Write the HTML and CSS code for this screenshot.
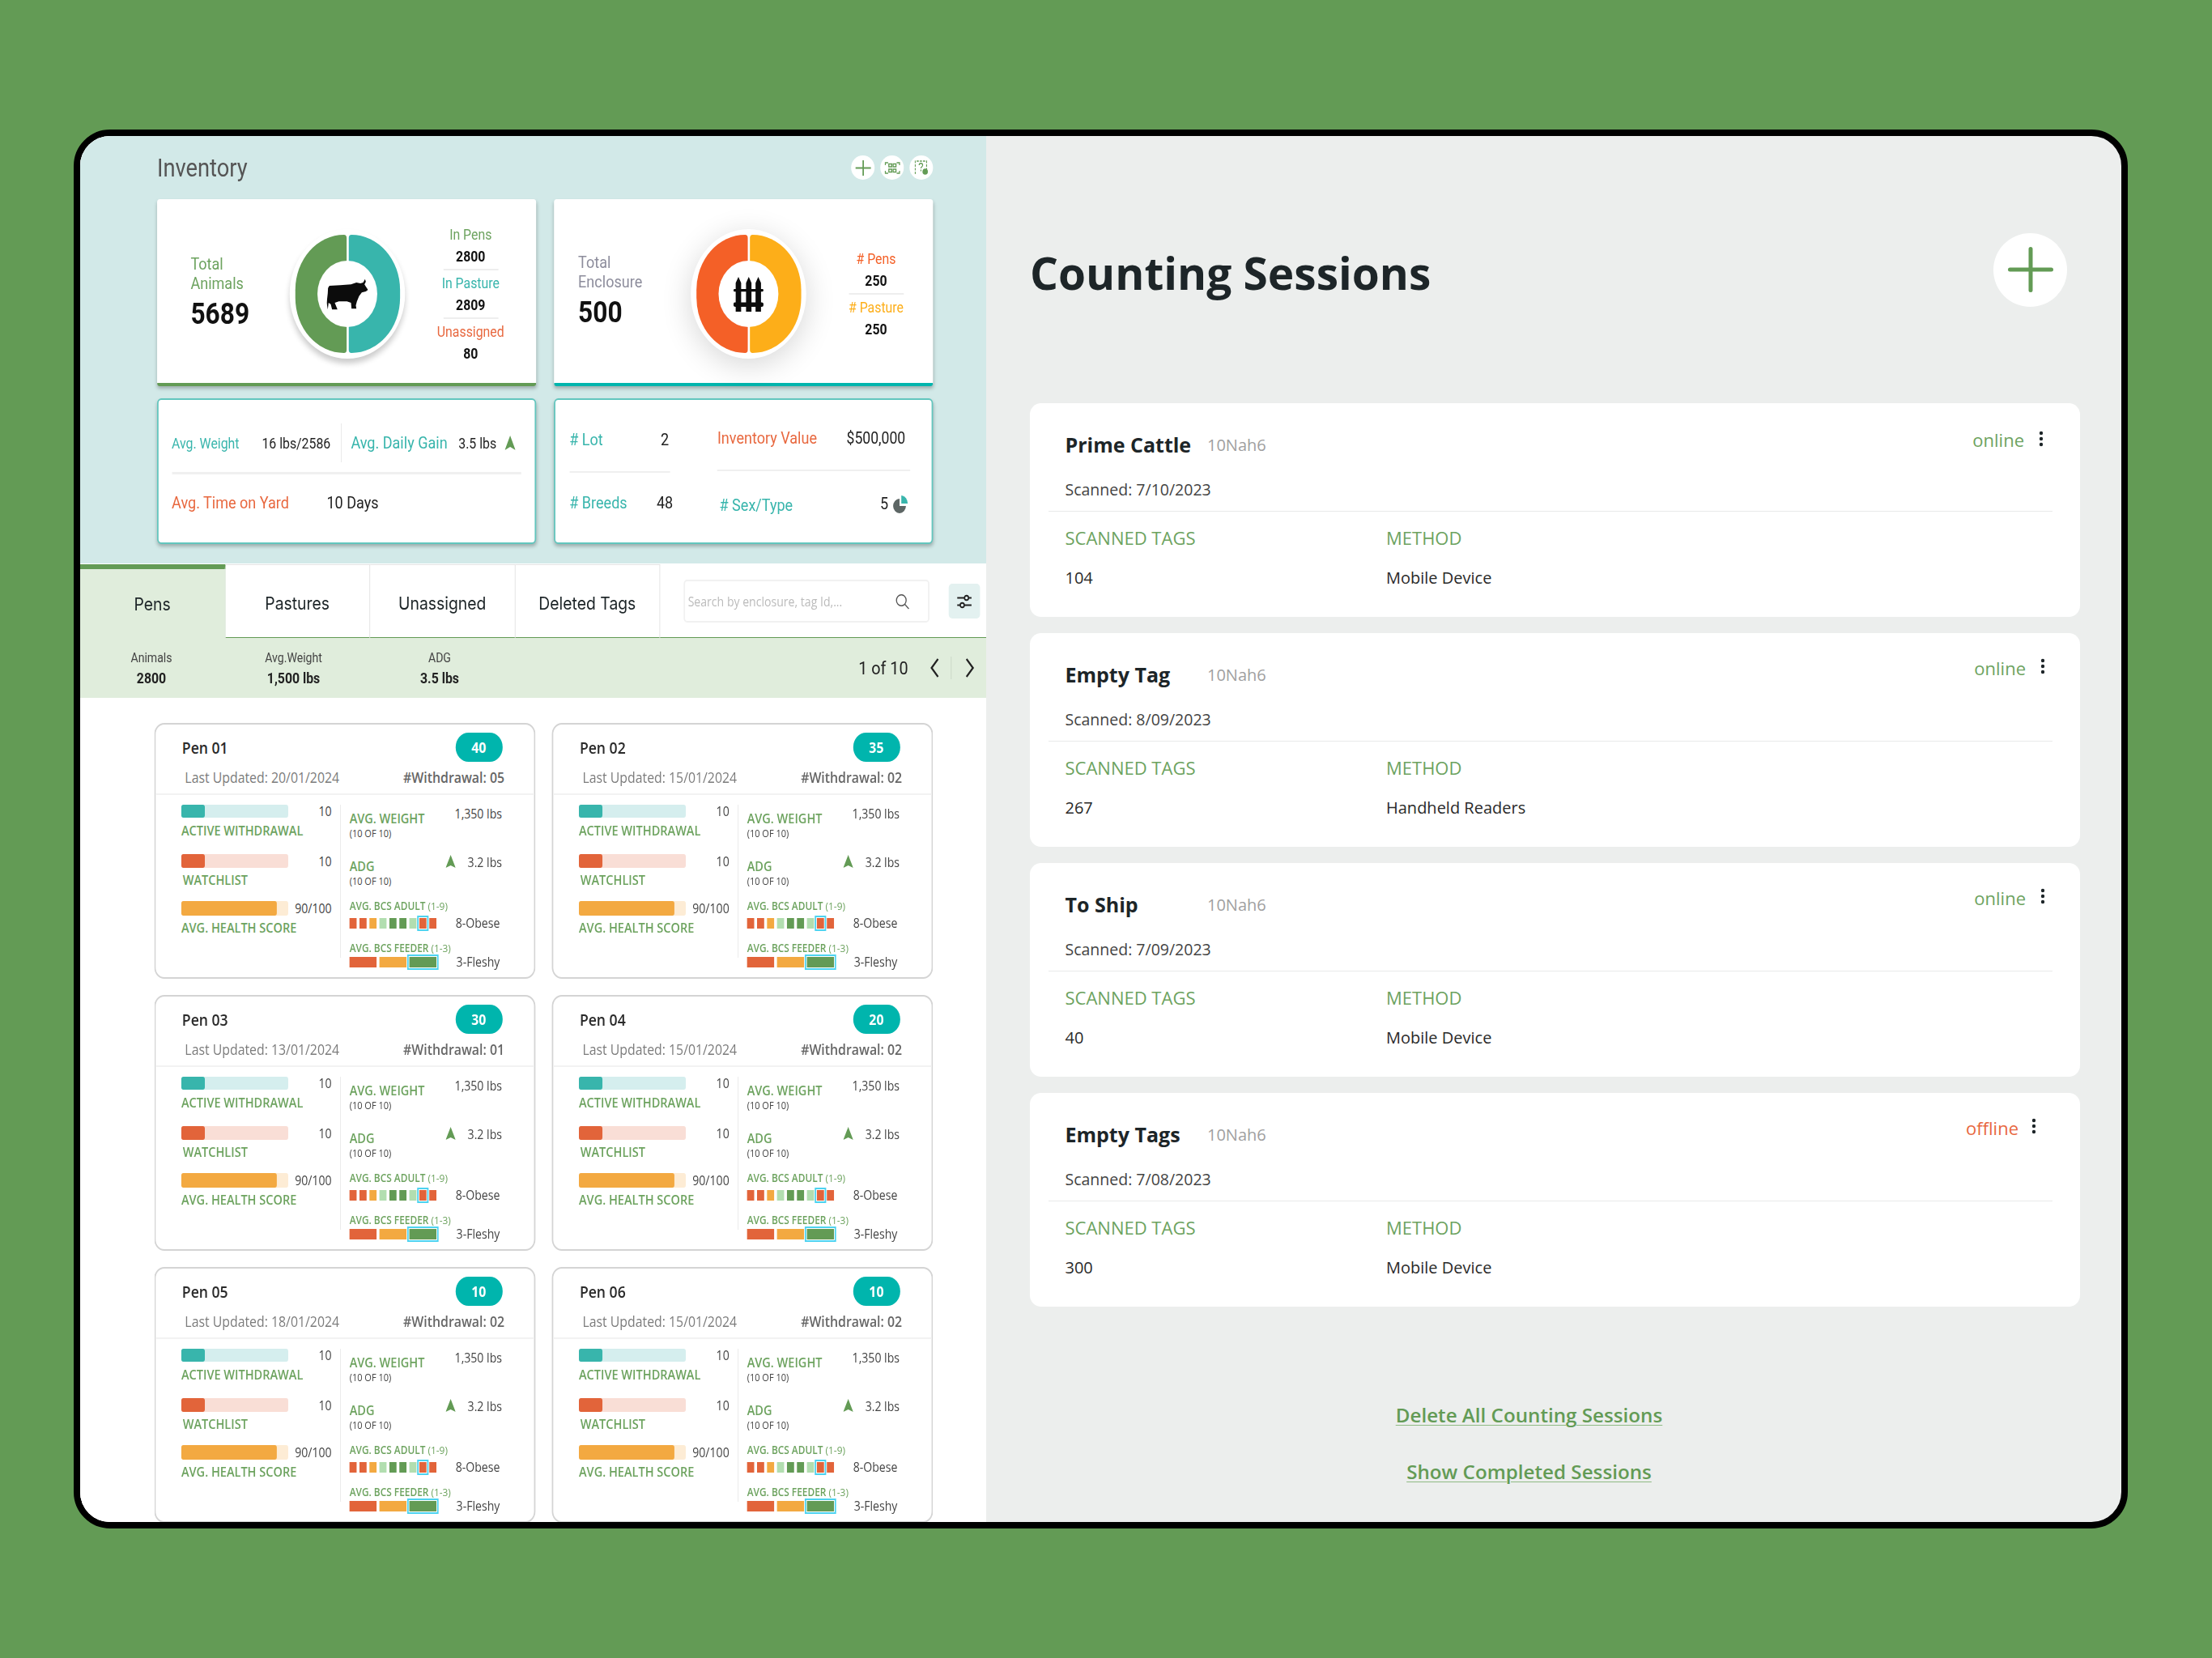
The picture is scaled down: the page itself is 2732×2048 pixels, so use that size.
FILE: index.html
```html
<!DOCTYPE html>
<html lang="en">
<head>
    <meta charset="UTF-8">
    <title>Inventory - Counting Sessions</title>
    <link rel="stylesheet" href="styles.css">
</head>
<body>
<div class="frame">
    <!-- left side is narrowed as a whole, see .inv-scale -->
    <div class="inv-pane">
        <div class="inv-scale">
            <section class="inventory">
                <div class="inv-head">
                    <h2>Inventory</h2>
                    <div class="inv-tools">
                        <span class="tool"><svg width="22" height="19" viewBox="0 0 22 19"><path d="M11 0v19M0 9.500h22" stroke="#639b55" stroke-width="2" fill="none"/></svg></span>
                        <span class="tool"><svg width="22" height="15" viewBox="0 0 22 15" fill="none" stroke="#639b55" stroke-width="1.500"><path d="M1 4V1h4M17 1h4v3M21 11v3h-4M5 14H1v-3"/><rect x="6" y="2.500" width="4" height="3.500"/><rect x="12" y="2.500" width="4" height="3.500"/><rect x="6" y="9" width="4" height="3.500"/><rect x="12" y="9" width="4" height="3.500"/></svg></span>
                        <span class="tool"><svg width="19" height="18" viewBox="0 0 19 18" fill="none" stroke="#639b55" stroke-width="1.300"><path d="M1 17V1h16v10" stroke-dasharray="3 1.500"/><path d="M6.500 6c0-3 5-3 5 0 0 2-2.500 2-2.500 4M9 11.500v2"/><circle cx="15" cy="14" r="3.800" fill="#639b55" stroke="none"/></svg></span>
                    </div>
                </div>
                <div class="inv-row">
                    <div class="sum-card sum-green">
                        <div class="sum-total animals">
                            <div class="t-line green">Total</div>
                            <div class="t-line green">Animals</div>
                            <div class="t-num">5689</div>
                        </div>
                        <div class="donut">
                            <div class="half half-l d-green"></div>
                            <div class="half half-r d-teal"></div>
                            <div class="hole">
                                <svg width="58" height="39" viewBox="0 0 153 117" preserveAspectRatio="none"><path d="M5 35 10 27 50 25 90 22 110 15 125 18 135 15 142 2 145 12 140 22 145 30 153 42 145 48 130 52 120 65 112 85 108 100 110 112 92 112 90 90 75 85 45 85 30 90 36 105 40 115 20 115 15 95 7 90 4 115 0 90 4 55Z" fill="#0c0c0c"/></svg>
                            </div>
                        </div>
                        <div class="sum-stats stats-a">
                            <div class="st-l green">In Pens</div>
                            <div class="st-v">2800</div>
                            <div class="st-hr"></div>
                            <div class="st-l teal">In Pasture</div>
                            <div class="st-v">2809</div>
                            <div class="st-hr"></div>
                            <div class="st-l orange">Unassigned</div>
                            <div class="st-v">80</div>
                        </div>
                    </div>
                    <div class="sum-card sum-teal">
                        <div class="sum-total enclosure">
                            <div class="t-line gray">Total</div>
                            <div class="t-line gray">Enclosure</div>
                            <div class="t-num">500</div>
                        </div>
                        <div class="donut donut-soft">
                            <div class="half half-l d-orange"></div>
                            <div class="half half-r d-yellow"></div>
                            <div class="hole">
                                <svg width="42" height="43" viewBox="0 0 110 128" preserveAspectRatio="none" fill="#0c0c0c"><path d="M8 22 18 0 28 22V128H8ZM46 22 56 0 66 22V128H46ZM81 22 91 0 101 22V128H81Z"/><rect x="0" y="45" width="110" height="9" rx="4"/><rect x="0" y="94" width="110" height="16" rx="6"/></svg>
                            </div>
                        </div>
                        <div class="sum-stats stats-b">
                            <div class="st-l orange2"># Pens</div>
                            <div class="st-v">250</div>
                            <div class="st-hr"></div>
                            <div class="st-l yellow"># Pasture</div>
                            <div class="st-v">250</div>
                        </div>
                    </div>
                </div>
                <div class="inv-row row-two">
                    <div class="info-card">
                        <div class="info-top">
                            <span class="i-a teal">Avg. Weight</span>
                            <span class="i-b">16 lbs/2586</span>
                            <span class="i-line"></span>
                            <span class="i-c teal">Avg. Daily Gain</span>
                            <span class="i-d">3.5 lbs</span>
                            <svg class="up-big" width="15" height="18" viewBox="0 0 15 18"><path d="M7.500 0 15 18 7.500 14 0 18Z" fill="#639b55"/></svg>
                        </div>
                        <div class="info-hr"></div>
                        <div class="info-bottom">
                            <span class="i-e orange">Avg. Time on Yard</span>
                            <span class="i-f">10 Days</span>
                        </div>
                    </div>
                    <div class="info-card info-split">
                        <div class="split-col split-left">
                            <div class="split-row"><span class="teal"># Lot</span><span class="split-n">2</span></div>
                            <div class="split-hr"></div>
                            <div class="split-row row-low"><span class="teal"># Breeds</span><span class="split-n">48</span></div>
                        </div>
                        <div class="split-col split-right">
                            <div class="split-row row-up"><span class="orange">Inventory Value</span><span class="split-money">$500,000</span></div>
                            <div class="split-hr"></div>
                            <div class="split-row row-lower"><span class="teal"># Sex/Type</span><span class="split-five">5 <svg width="22" height="23" viewBox="0 0 22 23"><path d="M10 5a9 9 0 1 0 9 9h-9Z" fill="#5d6665"/><path d="M12.500 1v10h9A10 10 0 0 0 12.500 1Z" fill="#38b5ac"/></svg></span></div>
                        </div>
                    </div>
                </div>
            </section>

            <div class="tabs">
                <div class="tab active">Pens</div>
                <div class="tab">Pastures</div>
                <div class="tab">Unassigned</div>
                <div class="tab">Deleted Tags</div>
                <div class="search">
                    <span>Search by enclosure, tag Id,...</span>
                    <svg width="20" height="20" viewBox="0 0 20 20" fill="none" stroke="#555" stroke-width="1.500"><circle cx="8.500" cy="8.500" r="6.800"/><path d="M13.500 13.500 19 19"/></svg>
                </div>
                <div class="filter-btn">
                    <svg width="22" height="18" viewBox="0 0 22 18" fill="none" stroke="#222" stroke-width="1.900"><path d="M1 4.500h10M17 4.500h4M1 13.500h4M11 13.500h10"/><circle cx="14" cy="4.500" r="2.800"/><circle cx="8" cy="13.500" r="2.800"/></svg>
                </div>
            </div>
            <div class="strip">
                <div class="strip-col c1"><div class="s-l">Animals</div><div class="s-v">2800</div></div>
                <div class="strip-col c2"><div class="s-l">Avg.Weight</div><div class="s-v">1,500 lbs</div></div>
                <div class="strip-col c3"><div class="s-l">ADG</div><div class="s-v">3.5 lbs</div></div>
                <div class="pager">
                    <span>1 of 10</span>
                    <svg class="prev" width="14" height="26" viewBox="0 0 14 26" fill="none" stroke="#222" stroke-width="2.500"><path d="M12 2 3 13l9 11"/></svg>
                    <i class="pager-line"></i>
                    <svg width="14" height="26" viewBox="0 0 14 26" fill="none" stroke="#222" stroke-width="2.500"><path d="m2 2 9 11-9 11"/></svg>
                </div>
            </div>

            <div class="pens" id="pens"></div>
        </div>
    </div>

    <div class="sessions">
        <div class="sess-head">
            <h1>Counting Sessions</h1>
            <span class="add-btn"><svg width="56" height="56" viewBox="0 0 56 56"><path d="M28 2.500v51M2.500 28h51" stroke="#639b55" stroke-width="5" stroke-linecap="round"/></svg></span>
        </div>
        <div class="sess-list" id="sessList"></div>
        <div class="sess-links">
            <a href="#">Delete All Counting Sessions</a>
            <a href="#">Show Completed Sessions</a>
        </div>
    </div>
</div>

<script>
    var pens = [
        ['Pen 01', 40, '20/01/2024', '05'],
        ['Pen 02', 35, '15/01/2024', '02'],
        ['Pen 03', 30, '13/01/2024', '01'],
        ['Pen 04', 20, '15/01/2024', '02'],
        ['Pen 05', 10, '18/01/2024', '02'],
        ['Pen 06', 10, '15/01/2024', '02']
    ];
    var sessions = [
        ['Prime Cattle', '7/10/2023', '104', 'Mobile Device', 'online', 'first'],
        ['Empty Tag', '8/09/2023', '267', 'Handheld Readers', 'online', ''],
        ['To Ship', '7/09/2023', '40', 'Mobile Device', 'online', ''],
        ['Empty Tags', '7/08/2023', '300', 'Mobile Device', 'offline', '']
    ];
    var adult = ['o', 'o', 'y', 'l', 'g', 'g', 'l', 'o sel', 'o'];

    function penCard(p) {
        var blocks = adult.map(function(c) { return '<i class="b9 ' + c + '"></i>'; }).join('');
        return '<div class="pen">' +
            '<div class="pen-top"><span class="pen-name">' + p[0] + '</span><span class="badge">' + p[1] + '</span></div>' +
            '<div class="pen-sub"><span>Last Updated: ' + p[2] + '</span><span class="wd">#Withdrawal: ' + p[3] + '</span></div>' +
            '<div class="pen-body">' +
                '<div class="pen-left">' +
                    '<div class="bar-row"><div class="track t-teal"><div class="fill f-teal"></div></div><span>10</span></div>' +
                    '<div class="bar-lab">ACTIVE WITHDRAWAL</div>' +
                    '<div class="bar-row r2"><div class="track t-red"><div class="fill f-red"></div></div><span>10</span></div>' +
                    '<div class="bar-lab lab2 watch">WATCHLIST</div>' +
                    '<div class="bar-row r3"><div class="track t-amb"><div class="fill f-amb"></div></div><span>90/100</span></div>' +
                    '<div class="bar-lab lab2">AVG. HEALTH SCORE</div>' +
                '</div>' +
                '<div class="pen-line"></div>' +
                '<div class="pen-right">' +
                    '<div class="m-row"><div class="m-lab"><b>AVG. WEIGHT</b><small>(10 OF 10)</small></div><span>1,350 lbs</span></div>' +
                    '<div class="m-row m2"><div class="m-lab"><b>ADG</b><small>(10 OF 10)</small></div><span class="adg"><svg width="14" height="16" viewBox="0 0 14 16"><path d="M7 0 14 16 7 13 0 16Z" fill="#639b55"/></svg>3.2 lbs</span></div>' +
                    '<div class="bcs-lab">AVG. BCS ADULT <em>(1-9)</em></div>' +
                    '<div class="bcs-row"><div class="blocks">' + blocks + '</div><span>8-Obese</span></div>' +
                    '<div class="bcs-lab b2">AVG. BCS FEEDER <em>(1-3)</em></div>' +
                    '<div class="bcs-row f"><div class="blocks"><i class="b3 o"></i><i class="b3 y"></i><i class="b3 g sel"></i></div><span>3-Fleshy</span></div>' +
                '</div>' +
            '</div>' +
        '</div>';
    }

    function sessCard(s) {
        return '<div class="sess ' + s[5] + ' ' + s[4] + '">' +
            '<div class="sess-top"><span class="sess-name">' + s[0] + '</span><span class="sess-code">10Nah6</span>' +
                '<span class="sess-state">' + s[4] + '</span>' +
                '<svg width="6" height="20" viewBox="0 0 6 20" fill="#1d2528"><circle cx="3" cy="3" r="2.200"/><circle cx="3" cy="10" r="2.200"/><circle cx="3" cy="17" r="2.200"/></svg></div>' +
            '<div class="sess-date">Scanned: ' + s[1] + '</div>' +
            '<div class="sess-hr"></div>' +
            '<div class="sess-grid"><span class="lab">SCANNED TAGS</span><span class="lab">METHOD</span><span class="val">' + s[2] + '</span><span class="val">' + s[3] + '</span></div>' +
        '</div>';
    }

    document.getElementById('pens').innerHTML = pens.map(penCard).join('');
    document.getElementById('sessList').innerHTML = sessions.map(sessCard).join('');
</script>
</body>
</html>
```
FILE: styles.css
```css
* {
    box-sizing: border-box;
}
body {
    margin: 0;
    height: 2048px;
    padding: 160px 0 0 91px;
    background-color: #639b55;
    overflow: hidden;
    font-family: 'Open Sans', sans-serif;
}
.frame {
    display: flex;
    width: 2537px;
    height: 1728px;
    border: 8px solid #000;
    border-radius: 45px;
    overflow: hidden;
    background-color: #eceeed;
}

/* Left side */
.inv-pane {
    width: 1119px;
    flex: none;
    overflow: hidden;
    background-color: #fff;
}
.inv-scale {
    width: 1272px;
    transform: scaleX(.88); /* the whole pane is narrower than tall */
    transform-origin: left top;
}
.inventory {
    height: 528px;
    padding: 19px 75px 0 108px;
    background-color: #d2e9e8;
    font-family: Roboto, sans-serif;
}
.inv-head {
    display: flex;
    justify-content: space-between;
    align-items: center;
    height: 40px;
}
.inv-head h2 {
    margin: 0;
    font-size: 31px;
    font-weight: 400;
    color: #555;
}
.inv-tools {
    display: flex;
    gap: 8px;
}
.tool {
    width: 33px;
    height: 30px;
    border-radius: 50%;
    background-color: #fff;
    display: flex;
    align-items: center;
    justify-content: center;
}
.inv-row {
    display: flex;
    gap: 25px;
    margin-top: 19px;
}
.row-two {
    margin-top: 15px;
}
.sum-card {
    display: flex;
    align-items: flex-start;
    width: 532px;
    height: 231px;
    background-color: #fff;
    border-radius: 4px;
    box-shadow: 0 3px 5px rgba(0, 0, 0, .25);
}
.sum-green {
    border-bottom: 4px solid #639b55;
}
.sum-teal {
    border-bottom: 4px solid #00b5ad;
}
.sum-total {
    flex: none;
}
.sum-total.animals {
    width: 186px;
    padding: 68px 0 0 47px;
}
.sum-total.enclosure {
    width: 192px;
    padding: 66px 0 0 34px;
}
.t-line {
    font-size: 20.500px;
    line-height: 24px;
}
.t-num {
    margin-top: 4px;
    font-size: 36px;
    line-height: 44px;
    font-weight: 700;
    color: #111;
}
.green { color: #6da35f; }
.gray { color: #8d8d9c; }
.teal { color: #38b5ac; }
.orange { color: #e8683f; }
.orange2 { color: #f46027; }
.yellow { color: #fdae19; }
.donut {
    position: relative;
    flex: none;
    width: 162px;
    height: 160px;
    margin-top: 37px;
    border-radius: 50%;
    background-color: #fff;
    box-shadow: 0 6px 8px rgba(0, 0, 0, .2);
}
.donut-soft {
    box-shadow: 0 8px 40px rgba(0, 0, 0, .16);
}
.half {
    position: absolute;
    top: 7px;
    width: 72px;
    height: 146px;
}
.half-l {
    left: 8px;
    border-radius: 72px 4px 4px 72px;
}
.half-r {
    left: 83px;
    border-radius: 4px 72px 72px 4px;
}
.d-green { background-color: #639b55; }
.d-teal { background-color: #38b5ac; }
.d-orange { background-color: #f46027; }
.d-yellow { background-color: #fdae19; }
.hole {
    position: absolute;
    left: 39px;
    top: 39px;
    width: 84px;
    height: 82px;
    border-radius: 50%;
    background-color: #fff;
    display: flex;
    align-items: center;
    justify-content: center;
}
.sum-stats {
    flex: none;
    width: 100px;
    text-align: center;
}
.stats-a {
    margin: 32px 0 0 42px;
}
.stats-b {
    margin: 62px 0 0 48px;
}
.st-l {
    font-size: 18px;
    line-height: 24px;
    white-space: nowrap;
}
.st-v {
    margin-top: 3px;
    font-size: 18px;
    line-height: 24px;
    font-weight: 700;
    color: #111;
}
.st-hr {
    width: 77px;
    height: 2px;
    margin: 3px auto 4px;
    background-color: #eee;
}
.info-card {
    width: 532px;
    height: 180px;
    padding: 29px 18px 0 18.500px;
    background-color: #fff;
    border: 2px solid #62c6be;
    border-radius: 6px;
    box-shadow: 0 3px 5px rgba(0, 0, 0, .25);
    color: #222;
}
.info-top {
    display: flex;
    align-items: center;
    height: 48px;
}
.i-a {
    width: 126.500px;
    font-size: 18px;
}
.i-b {
    width: 110.500px;
    font-size: 18px;
}
.i-line {
    width: 1px;
    height: 48px;
    margin-right: 13.500px;
    background-color: #e8e8e8;
}
.i-c {
    width: 151px;
    font-size: 20.500px;
}
.i-d {
    width: 64.500px;
    font-size: 18px;
}
.info-hr {
    width: 490px;
    height: 2.500px;
    margin-top: 12px;
    background-color: #f0f0f0;
}
.info-bottom {
    display: flex;
    margin-top: 23px;
    font-size: 20.500px;
    line-height: 24px;
}
.i-e {
    width: 217.500px;
}
.info-split {
    display: flex;
    padding: 34px 0 0 19.700px;
    font-size: 20.500px;
}
.split-col {
    flex: none;
}
.split-left {
    width: 141.500px;
    margin-right: 66px;
}
.split-right {
    width: 271px;
}
.split-row {
    display: flex;
    justify-content: space-between;
    align-items: center;
    height: 30px;
}
.split-n {
    width: 24px;
    margin-right: -4.400px;
    text-align: center;
}
.split-money {
    margin-right: 7px;
    font-size: 20px;
}
.split-five {
    display: flex;
    align-items: center;
    gap: 6px;
    margin-top: -4px;
    margin-right: 3px;
}
.split-hr {
    height: 2px;
    margin-top: 24px;
    background-color: #efefef;
}
.row-low {
    margin-top: 22px;
}
.row-up {
    margin-top: -2px;
}
.row-lower {
    margin-top: 27px;
    padding-left: 3px;
}

/* Tabs */
.tabs {
    display: flex;
    align-items: flex-start;
    height: 92px;
    border-bottom: 1px solid #639b55;
    font-family: Inter, sans-serif;
    font-size: 22px;
    color: #1d2528;
}
.tab {
    width: 203.500px;
    height: 91px;
    margin-top: 1px;
    padding-top: 4px;
    border-top: 1px solid #e4e4e4;
    border-right: 1px solid #e0e0e0;
    display: flex;
    align-items: center;
    justify-content: center;
}
.tab.active {
    height: 92px;
    padding-top: 0;
    border: 0;
    border-top: 6px solid #639b55;
    border-right: 1px solid #dfe8dc;
    background-color: #e0eddc;
}
.search {
    display: flex;
    align-items: center;
    justify-content: space-between;
    width: 345px;
    height: 53px;
    margin: 20px 0 0 33px;
    padding: 0 26px 0 4px;
    border: 2px solid #f1f1f1;
    border-radius: 5px;
    font-family: 'Open Sans', sans-serif;
    font-size: 16px;
    color: #bbb;
}
.filter-btn {
    width: 44px;
    height: 43px;
    margin: 25px 0 0 27px;
    border-radius: 5px;
    background-color: #e3f1f0;
    display: flex;
    align-items: center;
    justify-content: center;
}
.strip {
    display: flex;
    height: 74px;
    background-color: #e0eddc;
    font-family: Roboto, sans-serif;
    color: #222;
    text-align: center;
}
.strip-col {
    flex: none;
    padding-top: 14px;
}
.c1 {
    width: 200px;
}
.c2 {
    width: 120px;
    margin-left: 39.500px;
}
.c3 {
    width: 100px;
    margin-left: 95px;
}
.s-l {
    font-size: 16px;
    line-height: 22px;
    color: #444;
}
.s-v {
    margin-top: 2px;
    font-size: 18px;
    line-height: 24px;
    font-weight: 700;
}
.pager {
    display: flex;
    align-items: center;
    margin-left: auto;
    padding-right: 16px;
    height: 74px;
    font-size: 22.500px;
    color: #222;
}
.pager svg {
    margin-left: 18px;
}
.pager svg.prev {
    margin-left: 30px;
}
.pager-line {
    width: 1px;
    height: 28px;
    margin-left: 16px;
    margin-right: 1px;
    background-color: #c9d6c6;
}

/* Pen cards */
.pens {
    display: grid;
    grid-template-columns: 534.500px 534.500px;
    column-gap: 23.500px;
    row-gap: 20px;
    height: 1018px;
    padding: 31px 0 0 104px;
    overflow: hidden;
    background-color: #fff;
}
.pen {
    height: 316px;
    border: 2px solid #d4d4d4;
    border-radius: 14px;
    background-color: #fff;
}
.pen-top {
    display: flex;
    justify-content: space-between;
    align-items: center;
    height: 36px;
    margin-top: 10px;
    padding: 0 44px 0 37px;
}
.pen-name {
    font-size: 20px;
    font-weight: 600;
    color: #2a2a2a;
}
.badge {
    width: 66px;
    height: 36px;
    border-radius: 18px;
    background-color: #00b5ad;
    color: #fff;
    font-size: 18px;
    font-weight: 700;
    line-height: 36px;
    text-align: center;
}
.pen-sub {
    display: flex;
    justify-content: space-between;
    height: 34px;
    margin-top: 7px;
    padding: 0 41px 0 41px;
    border-bottom: 2px solid #f2f2f2;
    font-size: 18px;
    line-height: 24px;
    color: #7c7c7c;
}
.wd {
    font-weight: 600;
    color: #666;
}
.pen-body {
    display: flex;
    padding: 12px 0 0 36px;
    color: #444;
}
.pen-left {
    width: 211px;
    flex: none;
}
.bar-row {
    display: flex;
    justify-content: space-between;
    align-items: center;
    height: 16px;
    font-size: 16px;
}
.bar-row.r2 {
    height: 17px;
    margin-top: 19px;
}
.bar-row.r3 {
    height: 18px;
    margin-top: 16px;
}
.track {
    width: 150px;
    height: 100%;
    border-radius: 3px;
}
.fill {
    height: 100%;
    border-radius: 3px;
}
.t-teal { background-color: #d5eeee; }
.t-red { background-color: #f9ded6; }
.t-amb { background-color: #fdecd5; }
.f-teal { width: 33px; background-color: #38b5ac; }
.f-red { width: 33px; background-color: #e2643a; }
.f-amb { width: 134px; background-color: #f3a941; }
.bar-lab {
    margin-top: 6px;
    font-size: 16.500px;
    line-height: 20px;
    font-weight: 600;
    color: #6da35f;
    white-space: nowrap;
}
.bar-lab.lab2 {
    margin-top: 5px;
}
.bar-lab.watch {
    padding-left: 2px;
}
.pen-line {
    flex: none;
    width: 1px;
    height: 189px;
    margin: 0 12px 0 12px;
    background-color: #e8e8e8;
}
.pen-right {
    flex: none;
    width: 214px;
    font-size: 16px;
}
.m-row {
    display: flex;
    justify-content: space-between;
    line-height: 22px;
}
.m-row.m2 {
    margin-top: 16px;
}
.m-lab {
    padding-top: 7px;
}
.m2 .m-lab {
    padding-top: 6px;
}
.m-lab b {
    display: block;
    font-size: 16.500px;
    line-height: 20px;
    font-weight: 600;
    color: #6da35f;
}
.m-lab small {
    display: block;
    margin-top: 1px;
    font-size: 12.500px;
    line-height: 16px;
}
.adg svg {
    margin-right: 17px;
    vertical-align: -1px;
}
.bcs-lab {
    margin-top: 14px;
    font-size: 13.500px;
    line-height: 16px;
    font-weight: 600;
    color: #6da35f;
    white-space: nowrap;
}
.bcs-lab.b2 {
    margin-top: 12px;
}
.bcs-lab em {
    font-style: normal;
    font-weight: 400;
}
.bcs-row {
    display: flex;
    justify-content: space-between;
    align-items: center;
    height: 22px;
    margin-top: 2px;
    padding-right: 3px;
}
.bcs-row.f {
    margin-top: -2px;
}
.blocks {
    display: flex;
    gap: 3.800px;
}
.blocks i {
    display: block;
    height: 13px;
}
.b9 {
    width: 10.200px;
}
.b3 {
    width: 38px;
}
.o { background-color: #e2643a; }
.y { background-color: #f3a941; }
.l { background-color: #b2deb0; }
.g { background-color: #639b55; }
.blocks .sel {
    outline: 2px solid #4dd3f0;
    outline-offset: 1px;
}

/* Right side */
.sessions {
    flex: 1;
    padding: 121px 51px 0 54px;
}
.sess-head {
    display: flex;
    justify-content: space-between;
    align-items: center;
    height: 91px;
    padding-right: 16px;
}
.sess-head h1 {
    margin: 3px 0 0;
    font-size: 55px;
    font-weight: 700;
    color: #1d2528;
}
.add-btn {
    width: 91px;
    height: 91px;
    margin-top: -3px;
    border-radius: 50%;
    background-color: #fff;
    display: flex;
    align-items: center;
    justify-content: center;
}
.sess-list {
    display: flex;
    flex-direction: column;
    gap: 20px;
    margin-top: 118px;
}
.sess {
    height: 264px;
    padding: 34px 0 0 43.500px;
    border-radius: 14px;
    background-color: #fff;
}
.sess-top {
    display: flex;
    align-items: center;
    height: 34px;
    padding-right: 43px;
}
.sess.first .sess-top {
    padding-right: 45px;
}
.sess.offline .sess-top {
    padding-right: 54px;
}
.sess-name {
    width: 175.500px;
    font-size: 25px;
    font-weight: 700;
    color: #1d2528;
    white-space: nowrap;
}
.sess-code {
    font-size: 20px;
    color: #a0a0a0;
}
.sess-state {
    margin-left: auto;
    margin-right: 18px;
    margin-top: -17px;
    font-size: 22px;
    color: #6da35f;
}
.sess-top svg {
    margin-top: -21px;
}
.sess.first .sess-state {
    margin-top: -12px;
}
.sess.first svg {
    margin-top: -14px;
}
.sess.offline .sess-state {
    margin-right: 16px;
    color: #e8683f;
}
.sess-date {
    margin-top: 25px;
    font-size: 19.500px;
    line-height: 28px;
    color: #444;
}
.sess-hr {
    height: 1px;
    margin: 12px 34px 0 -20.500px;
    background-color: #e8eaea;
}
.sess-grid {
    display: grid;
    grid-template-columns: 396.500px 1fr;
    row-gap: 21px;
    margin-top: 17px;
}
.lab {
    font-size: 22px;
    line-height: 30px;
    color: #6da35f;
}
.val {
    font-size: 20px;
    line-height: 28px;
    color: #2a2a2a;
}
.sess-links {
    display: flex;
    flex-direction: column;
    align-items: center;
    gap: 34px;
    margin-top: 116px;
    padding-right: 64px;
}
.sess-links a {
    font-size: 24.200px;
    line-height: 36px;
    font-weight: 600;
    color: #639b55;
    text-decoration: underline;
    text-decoration-color: #8fba84;
    text-decoration-thickness: 1px;
    text-underline-offset: 3px;
}
```
